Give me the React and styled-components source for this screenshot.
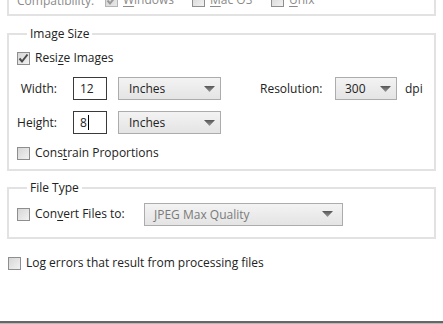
import React from 'react';
import styled, { createGlobalStyle } from 'styled-components';

const GlobalStyle = createGlobalStyle`
  html, body {
    margin: 0;
    padding: 0;
    background: #fff;
  }
`;

const Page = styled.div`
  width: 443px;
  height: 324px;
  box-sizing: border-box;
  overflow: hidden;
  background: #fff;
  padding: 0 7px;
  display: flex;
  flex-direction: column;
  font-family: "Open Sans", "Noto Sans", sans-serif;
  font-size: 12px;
  color: #222;
`;

const TopGroup = styled.div`
  margin-top: -8px;
  border: 2px solid #e2e2e2;
  border-top: none;
  padding: 0 8px 6px;
  display: flex;
  align-items: center;
  height: 16px;
  color: #8a8a8a;
`;

const Group = styled.fieldset`
  margin: ${(p) => p.$top || 0}px 0 0;
  border: 2px solid #e2e2e2;
  padding: ${(p) => p.$padTop || 10}px 8px ${(p) => p.$padBottom || 8}px;
  display: flex;
  flex-direction: column;
  gap: 11px;
  min-width: 0;
`;

const Legend = styled.legend`
  margin-left: 10px;
  padding: 0 3px;
  line-height: 14px;
  font-size: 12px;
  color: #222;
`;

const Row = styled.div`
  display: flex;
  align-items: center;
  height: ${(p) => p.$h || 16}px;
`;

const LogRow = styled(Row)`
  margin-top: 16px;
  padding-left: 1px;
`;

const CheckLabel = styled.label`
  display: flex;
  align-items: center;
  gap: 5px;
  width: ${(p) => (p.$w ? `${p.$w}px` : 'auto')};
  flex: none;
  white-space: nowrap;
  line-height: 16px;
`;

const Box = styled.span`
  width: 13px;
  height: 13px;
  box-sizing: border-box;
  flex: none;
  border: 1px solid ${(p) => (p.$disabled ? '#b4b4b4' : '#8e8e8e')};
  background: ${(p) =>
    p.$disabled
      ? 'linear-gradient(135deg, #d4d4d4, #e8e8e8)'
      : 'linear-gradient(135deg, #d6d6d6, #f2f2f2)'};
  display: flex;
  align-items: center;
  justify-content: center;
`;

const Key = styled.span`
  text-decoration: underline;
  text-underline-offset: 2px;
`;

const FieldLabel = styled.span`
  width: ${(p) => p.$w}px;
  flex: none;
  text-align: ${(p) => p.$align || 'left'};
  margin-left: ${(p) => p.$ml || 0}px;
  margin-right: ${(p) => p.$mr || 0}px;
  white-space: nowrap;
`;

const TextInput = styled.div`
  width: 34px;
  height: 23px;
  box-sizing: border-box;
  border: 1px solid #3a3a3a;
  background: #fff;
  padding-left: 6px;
  display: flex;
  align-items: center;
  flex: none;
  margin-right: 11px;
`;

const Caret = styled.span`
  display: inline-block;
  width: 0;
  height: 15px;
  border-left: 1px solid #000;
  margin-left: 1px;
`;

const Select = styled.div`
  width: ${(p) => p.$w}px;
  height: ${(p) => p.$h || 23}px;
  box-sizing: border-box;
  flex: none;
  border: 1px solid #acacac;
  background: linear-gradient(to bottom, #f3f3f3, #e4e4e4);
  display: flex;
  align-items: center;
  justify-content: space-between;
  padding: 0 ${(p) => p.$pr || 5}px 0 ${(p) => p.$pl || 10}px;
  color: ${(p) => (p.$disabled ? '#7a7a7a' : '#222')};
  white-space: nowrap;
`;

const Divider = styled.div`
  margin: auto -7px 0;
  height: 3px;
  flex: none;
  border-top: 2px solid #666;
  background: #b8b8b8;
  box-sizing: border-box;
`;

const Check = ({ disabled }) => (
  <svg width="11" height="11" viewBox="0 0 11 11">
    <path
      d="M1.5 5.5 L4 8.5 L9.5 1.5"
      fill="none"
      stroke={disabled ? '#9a9a9a' : '#4a4a4a'}
      strokeWidth="2"
    />
  </svg>
);

const Arrow = () => (
  <svg width="11" height="6" viewBox="0 0 11 6">
    <defs>
      <linearGradient id="arr" x1="0" y1="0" x2="0" y2="1">
        <stop offset="0" stopColor="#555" />
        <stop offset="1" stopColor="#999" />
      </linearGradient>
    </defs>
    <path d="M0 0 H11 L5.5 6 Z" fill="url(#arr)" />
  </svg>
);

const Checkbox = ({ checked, disabled, children, w }) => (
  <CheckLabel $w={w}>
    <Box $disabled={disabled}>{checked && <Check disabled={disabled} />}</Box>
    <span>{children}</span>
  </CheckLabel>
);

const Dropdown = ({ value, w, disabled, pl, pr }) => (
  <Select $w={w} $disabled={disabled} $pl={pl} $pr={pr}>
    <span>{value}</span>
    <Arrow />
  </Select>
);

const App = () => (
  <>
    <GlobalStyle />
    <Page>
      <TopGroup>
        <FieldLabel $w={88}>Compatibility:</FieldLabel>
        <Checkbox checked disabled w={87}>
          <Key>W</Key>indows
        </Checkbox>
        <Checkbox w={79}>
          <Key>M</Key>ac OS
        </Checkbox>
        <Checkbox>
          <Key>U</Key>nix
        </Checkbox>
      </TopGroup>

      <Group $top={11} $padTop={9}>
        <Legend>Image Size</Legend>
        <Row>
          <Checkbox checked>
            Resi<Key>z</Key>e Images
          </Checkbox>
        </Row>
        <Row $h={23}>
          <FieldLabel $w={40} $align="right" $mr={16}>Width:</FieldLabel>
          <TextInput>12</TextInput>
          <Dropdown value="Inches" w={103} pr={5} />
          <FieldLabel $w={75} $ml={39}>Resolution:</FieldLabel>
          <Dropdown value="300" w={62} pl={9} />
          <FieldLabel $w={20} $ml={8}>dpi</FieldLabel>
        </Row>
        <Row $h={23}>
          <FieldLabel $w={40} $align="right" $mr={16}>Height:</FieldLabel>
          <TextInput>
            8<Caret />
          </TextInput>
          <Dropdown value="Inches" w={103} pr={5} />
        </Row>
        <Row>
          <Checkbox>
            Cons<Key>t</Key>rain Proportions
          </Checkbox>
        </Row>
      </Group>

      <Group $top={10} $padTop={7} $padBottom={11}>
        <Legend>File Type</Legend>
        <Row $h={24}>
          <Checkbox w={127}>
            Con<Key>v</Key>ert Files to:
          </Checkbox>
          <Dropdown value="JPEG Max Quality" w={199} pl={9} pr={9} disabled />
        </Row>
      </Group>

      <LogRow>
        <Checkbox>
          Lo<Key>g</Key> errors that result from processing files
        </Checkbox>
      </LogRow>

      <Divider />
    </Page>
  </>
);

export default App;
